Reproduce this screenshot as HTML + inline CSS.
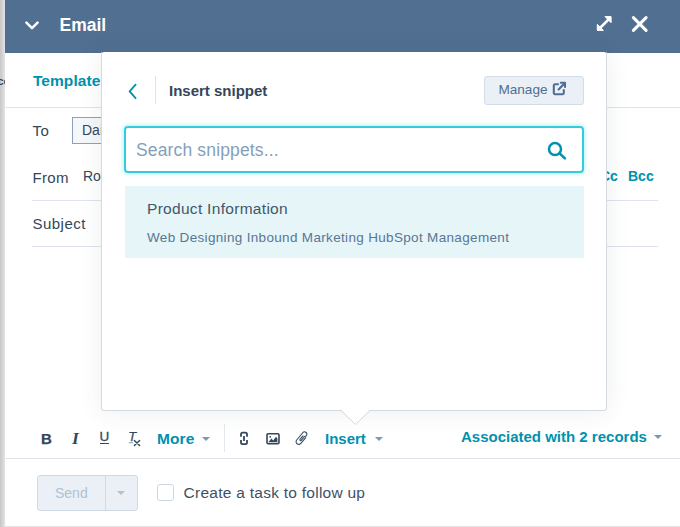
<!DOCTYPE html>
<html>
<head>
<meta charset="utf-8">
<title>Email</title>
<style>
*{box-sizing:border-box;margin:0;padding:0}
html,body{width:680px;height:527px;overflow:hidden;background:linear-gradient(90deg,#c6c6c6 0,#e4e4e4 5px,#e4e4e4 100%);font-family:"Liberation Sans",sans-serif;color:#33475b}
.abs{position:absolute}
#win{position:absolute;left:5px;top:0;width:675px;height:526px;background:#fff;overflow:hidden}
#hdr{position:absolute;left:0;top:0;width:675px;height:53px;background:#516f90}
.t{position:absolute;white-space:nowrap;line-height:1}
.teal{color:#0091ae;font-weight:bold}
.hl{position:absolute;height:1px;background:#dfe3eb}
#pop{position:absolute;left:96px;top:51px;width:506px;height:360px;background:#fff;background-clip:padding-box;border:1px solid #d5dae1;border-top-color:transparent;border-radius:3px;box-shadow:0 1px 24px 0 rgba(45,62,80,.09)}
</style>
</head>
<body>
<div class="t" style="left:-2.5px;top:75.7px;font-size:11px;font-weight:bold;color:#33475b">cc</div>
<div id="win">
  <div id="hdr">
    <svg class="abs" style="left:19px;top:19px" width="17" height="14" viewBox="0 0 17 14"><path d="M2.4 3.7 L8 9.2 L13.6 3.7" fill="none" stroke="#fff" stroke-width="2.5" stroke-linecap="round" stroke-linejoin="round"/></svg>
    <div class="t" style="left:54.5px;top:16.7px;font-size:17.5px;font-weight:bold;color:#fff">Email</div>
    <svg class="abs" style="left:590.5px;top:15.2px" width="17" height="17" viewBox="0 0 17 17"><path d="M4.5 12.5 L12.5 4.5" stroke="#fff" stroke-width="2.5" fill="none"/><path d="M9 1.6 H15.1 V7.7 Z M1.3 9.3 V15.4 H7.4 Z" fill="#fff" stroke="#fff" stroke-width="1" stroke-linejoin="round"/></svg>
    <svg class="abs" style="left:626px;top:15px" width="18" height="18" viewBox="0 0 18 18"><path d="M2.4 2.6 L15.1 15.4 M15.1 2.6 L2.4 15.4" fill="none" stroke="#fff" stroke-width="3.1" stroke-linecap="round"/></svg>
  </div>

  <div class="t teal" style="left:28px;top:73px;font-size:15.5px;letter-spacing:.05px">Templates</div>
  <div class="hl" style="left:0;top:107px;width:675px"></div>

  <div class="t" style="left:27.6px;top:123px;font-size:15px;letter-spacing:.5px">To</div>
  <div class="abs" style="left:67px;top:117px;width:120px;height:27px;border:1px solid #8da2b8;background:#f5f8fa"></div>
  <div class="t" style="left:77px;top:123px;font-size:14px">Daisy</div>

  <div class="t" style="left:27.4px;top:170px;font-size:15px;letter-spacing:.4px">From</div>
  <div class="t" style="left:78px;top:168.5px;font-size:14px">Ro</div>
  <div class="t teal" style="left:595px;top:169px;font-size:14px">Cc</div>
  <div class="t teal" style="left:623px;top:169px;font-size:14px">Bcc</div>
  <div class="hl" style="left:27px;top:200px;width:626px"></div>

  <div class="t" style="left:27.4px;top:216px;font-size:15px;letter-spacing:.5px">Subject</div>
  <div class="hl" style="left:27px;top:246px;width:626px"></div>

  <!-- toolbar -->
  <div class="t" style="left:36px;top:430.8px;font-size:15px;font-weight:bold;-webkit-text-stroke:.25px #33475b">B</div>
  <div class="t" style="left:67px;top:429.9px;font-size:17.5px;font-style:italic;font-weight:bold;font-family:'Liberation Serif',serif">I</div>
  <div class="t" style="left:94.6px;top:429.8px;font-size:13.5px;-webkit-text-stroke:.3px #33475b">U</div>
  <div class="abs" style="left:95.2px;top:442.6px;width:8.8px;height:1.3px;background:#33475b"></div>
  <div class="t" style="left:123.2px;top:429.6px;font-size:13px;font-style:italic;-webkit-text-stroke:.25px #33475b">T</div>
  <svg class="abs" style="left:122px;top:438px" width="16" height="10" viewBox="0 0 16 10"><path d="M7.4 2.4 L12.6 7.4 M12.6 2.4 L7.4 7.4" stroke="#33475b" stroke-width="1.4" stroke-linecap="round" fill="none"/><path d="M1.8 4.7 H6" stroke="#99a5b3" stroke-width="1.1"/></svg>
  <div class="t teal" style="left:152px;top:430.5px;font-size:15.5px;letter-spacing:.1px">More</div>
  <div class="abs" style="left:197px;top:437px;border-left:4px solid transparent;border-right:4px solid transparent;border-top:4px solid #7c98b6"></div>
  <div class="abs" style="left:219.3px;top:424.4px;width:1px;height:27.4px;background:#e3e7ee"></div>
  <svg class="abs" style="left:232.7px;top:430.7px" width="12" height="16" viewBox="0 0 12 16"><g fill="none" stroke="#33475b" stroke-width="1.8" stroke-linejoin="round"><path d="M3 5.8 V3.2 a1.6 1.6 0 0 1 1.6 -1.6 H7.4 a1.6 1.6 0 0 1 1.6 1.6 V5.8"/><path d="M3 9 V11.6 a1.6 1.6 0 0 0 1.6 1.6 H7.4 a1.6 1.6 0 0 0 1.6 -1.6 V9"/><path d="M6 4.9 V9.9"/></g></svg>
  <svg class="abs" style="left:260px;top:432px" width="16" height="14" viewBox="0 0 16 14"><rect x="2" y="1.7" width="12" height="9.9" rx="1.2" fill="none" stroke="#33475b" stroke-width="1.6"/><path d="M3.6 10 L6.4 6.6 L8.2 8.4 L11 4.8 L12.4 6.4 V10 Z" fill="#33475b"/><circle cx="5.2" cy="4.8" r="0.9" fill="#33475b"/></svg>
  <svg class="abs" style="left:286px;top:428px" width="22" height="20" viewBox="0 0 22 20"><g transform="translate(10.8,10.1) rotate(40) translate(-2.7,4.7)"><path d="M5.4 -7.6 V0 A2.7 2.7 0 0 1 0 0 V-9.4 A2.35 2.35 0 0 1 4.7 -9.4 L3.7 -7.2 V-2.6 A0.8 0.8 0 0 1 2.1 -2.6 V-7.2" fill="none" stroke="#33475b" stroke-width="1.05" stroke-linecap="round" stroke-linejoin="round"/></g></svg>
  <div class="t teal" style="left:320px;top:431px;font-size:15px">Insert</div>
  <div class="abs" style="left:370px;top:437px;border-left:4px solid transparent;border-right:4px solid transparent;border-top:4px solid #7c98b6"></div>
  <div class="t teal" style="left:456px;top:429px;font-size:15px">Associated with 2 records</div>
  <div class="abs" style="left:649px;top:435px;border-left:4px solid transparent;border-right:4px solid transparent;border-top:4px solid #7c98b6"></div>

  <div class="hl" style="left:0;top:458px;width:675px"></div>

  <!-- footer -->
  <div class="abs" style="left:32px;top:475px;width:101px;height:36px;background:#eaf0f6;border:1px solid #d0dae5;border-radius:3px"></div>
  <div class="abs" style="left:100px;top:476px;width:1px;height:34px;background:#d0dae5"></div>
  <div class="t" style="left:50px;top:485.5px;font-size:14px;color:#b0c1d4">Send</div>
  <div class="abs" style="left:112px;top:491px;border-left:4px solid transparent;border-right:4px solid transparent;border-top:4px solid #b0c1d4"></div>
  <div class="abs" style="left:152.2px;top:484px;width:17px;height:17px;border:1.5px solid #cbd6e2;border-radius:3px;background:#fff"></div>
  <div class="t" style="left:178.6px;top:485px;font-size:15.5px;letter-spacing:.26px;color:#3d5166">Create a task to follow up</div>

  <!-- popover -->
  <div id="pop">
    <svg class="abs" style="left:23.4px;top:30px" width="14" height="18" viewBox="0 0 14 18"><path d="M10.6 2.6 L4.6 9.4 L10.6 16.2" fill="none" stroke="#0091ae" stroke-width="1.8" stroke-linecap="round" stroke-linejoin="round"/></svg>
    <div class="abs" style="left:53px;top:24px;width:1px;height:28px;background:#dfe3eb"></div>
    <div class="t" style="left:67px;top:31px;font-size:15px;font-weight:bold">Insert snippet</div>
    <div class="abs" style="left:382px;top:24px;width:100px;height:28.6px;background:#eaf0f6;border:1px solid #d3dde8;border-radius:3px"></div>
    <div class="t" style="left:396.4px;top:30.5px;font-size:13.6px;color:#506e91">Manage</div>
    <svg class="abs" style="left:450px;top:29px" width="15" height="15" viewBox="0 0 15 15"><g fill="none" stroke="#506e91" stroke-width="2.1" stroke-linecap="round" stroke-linejoin="round"><path d="M6 3.2 H3 a1.2 1.2 0 0 0 -1.2 1.2 V12 a1.2 1.2 0 0 0 1.2 1.2 H10.6 a1.2 1.2 0 0 0 1.2 -1.2 V9"/><path d="M6.6 8.4 L12.6 2.2"/><path d="M8.8 1.8 H13 V6"/></g></svg>
    <div class="abs" style="left:22px;top:74px;width:460px;height:46.5px;border:2px solid #36cbd9;border-radius:4px;background:#fff;box-shadow:0 0 4px 1px rgba(0,208,228,.3)"></div>
    <div class="t" style="left:34px;top:89.6px;font-size:17.5px;letter-spacing:.15px;color:#859fba">Search snippets...</div>
    <svg class="abs" style="left:442px;top:88px" width="24" height="22" viewBox="0 0 24 22"><circle cx="11" cy="9.1" r="6" fill="none" stroke="#0091ae" stroke-width="2.5"/><path d="M15.6 13.4 L20.9 18.4" stroke="#0091ae" stroke-width="2.6" stroke-linecap="round"/></svg>
    <div class="abs" style="left:23px;top:134px;width:459px;height:71.5px;background:#e5f5f8"></div>
    <div class="t" style="left:45px;top:148.6px;font-size:15.5px;letter-spacing:.3px;color:#42566a">Product Information</div>
    <div class="t" style="left:45px;top:178.7px;font-size:13.5px;letter-spacing:.33px;color:#5a7696">Web Designing Inbound Marketing HubSpot Management</div>
  </div>
  <svg class="abs" style="left:335px;top:410px" width="32" height="17" viewBox="0 0 32 17"><path d="M0.5 -1 L15.5 14 L30.5 -1 Z" fill="#fff"/><path d="M1 0.5 L15.5 14.5 L30 0.5" fill="none" stroke="#d2d9e1" stroke-width="1"/></svg>
</div>
</body>
</html>
